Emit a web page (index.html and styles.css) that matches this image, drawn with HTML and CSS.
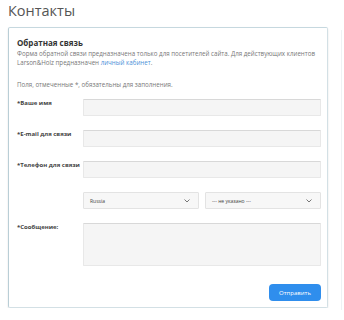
FILE: index.html
```html
<!DOCTYPE html>
<html lang="ru">
<head>
    <meta charset="UTF-8" />
    <meta name="viewport" content="width=device-width, initial-scale=1.0">
    <title>Контакты</title>
    <link rel="stylesheet" href="styles.css">
</head>
<body>
    <h1 class="page-title">Контакты</h1>

    <div class="card">
        <h2>Обратная связь</h2>
        <p class="intro">
            Форма обратной связи предназначена только для посетителей сайта. Для действующих клиентов<br>
            Larson&amp;Holz предназначен <a href="#">личный кабинет</a>.
        </p>
        <p class="note">Поля, отмеченные *, обязательны для заполнения.</p>

        <form class="form" onsubmit="return false">
            <label for="name">*Ваше имя</label>
            <input type="text" id="name" />

            <label for="email">*E-mail для связи</label>
            <input type="text" id="email" />

            <label for="phone">*Телефон для связи</label>
            <input type="text" id="phone" />

            <span></span>
            <div class="selects">
                <div class="select">
                    <span>Russia</span>
                    <svg width="6" height="4" viewBox="0 0 6 4"><path d="M0.5 0.5 L3 3 L5.5 0.5" fill="none" stroke="#555" stroke-width="0.8"/></svg>
                </div>
                <div class="select">
                    <span>--- не указано ---</span>
                    <svg width="6" height="4" viewBox="0 0 6 4"><path d="M0.5 0.5 L3 3 L5.5 0.5" fill="none" stroke="#555" stroke-width="0.8"/></svg>
                </div>
            </div>

            <label for="message">*Сообщение:</label>
            <textarea id="message"></textarea>

            <div class="actions">
                <button type="submit">Отправить</button>
            </div>
        </form>
    </div>
    <div class="side-line"></div>
</body>
</html>
```

FILE: styles.css
```css
body {
    margin: 0;
    padding: 0 8px;
    font-family: "Open Sans", Arial, sans-serif;
    background-color: white;
    color: #555;
}

.page-title {
    margin: 0;
    padding-top: 1px;
    font-size: 14.5px;
    font-weight: normal;
    line-height: 20px;
    color: #555;
}

.card {
    margin-top: 6px;
    width: 320px;
    height: 281px;
    box-sizing: border-box;
    padding: 9px 9px 0 8px;
    border: 1px solid #d3e0e5;
    border-left-color: #b9ced6;
    border-top-color: #c6d8df;
    border-radius: 2px;
    box-shadow: 0 1px 2px rgba(0,0,0,0.12);
}

.card h2 {
    margin: 0;
    font-size: 8px;
    font-weight: bold;
    line-height: 12px;
    color: #333;
}

.intro {
    margin: 0;
    font-size: 6.2px;
    line-height: 9px;
    color: #777;
}

.intro a {
    color: #4a8fd8;
    text-decoration: none;
}

.note {
    margin: 13px 0 0;
    font-size: 6.2px;
    line-height: 9px;
    color: #777;
}

.form {
    margin-top: 10px;
    display: grid;
    grid-template-columns: 66px 238px;
    row-gap: 14px;
    align-items: start;
}

.form label {
    font-size: 6px;
    font-weight: bold;
    line-height: 8px;
    color: #444;
}

input, textarea {
    display: block;
    width: 100%;
    height: 17px;
    margin: 0;
    padding: 0 6px;
    box-sizing: border-box;
    border: 1px solid #e8e8e8;
    border-top-color: #d8d8d8;
    border-radius: 1px;
    background-color: #f5f5f5;
    font-family: inherit;
    font-size: 6px;
}

textarea {
    height: 43px;
    resize: none;
}

.selects {
    display: flex;
    gap: 6px;
}

.select {
    flex: 1;
    height: 17px;
    box-sizing: border-box;
    padding: 0 8px 0 6px;
    display: flex;
    align-items: center;
    justify-content: space-between;
    border: 1px solid #e3e3e3;
    border-radius: 1px;
    background-color: #f7f7f7;
    font-size: 5px;
    color: #444;
}

.actions {
    grid-column: 1 / 3;
    display: flex;
    justify-content: flex-end;
    margin-top: 4px;
}

button {
    width: 52px;
    height: 17px;
    padding: 0;
    border: none;
    border-radius: 4px;
    background-color: #2f8eed;
    color: white;
    font-family: inherit;
    font-size: 6px;
    cursor: pointer;
}

.side-line {
    position: absolute;
    left: 341px;
    top: 30px;
    width: 1px;
    height: 280px;
    background-color: #eef2f4;
}
```
